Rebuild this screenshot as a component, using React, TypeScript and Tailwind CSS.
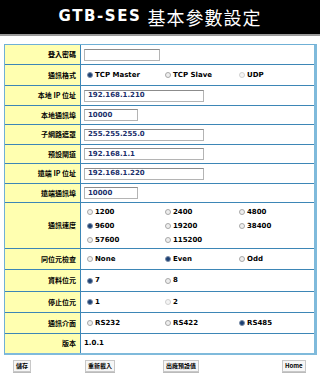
import React from "react";

const LBL = "font-['Noto_Sans_CJK_TC','Noto_Sans',sans-serif]";
const VAL = "font-['DejaVu_Sans',sans-serif]";

function Radio({ checked, label, dim }: { checked?: boolean; label: string; dim?: boolean }) {
  return (
    <div className="flex items-center gap-[2px]">
      <span
        className={
          "inline-block w-[6px] h-[6px] rounded-full border " +
          (checked
            ? "bg-[#1b3f73] border-[#7d8fa8]"
            : dim
            ? "bg-[#f4f4f4] border-[#d0d0d0]"
            : "bg-[#eeeeee] border-[#a8a8a8]")
        }
      />
      <span className={VAL + " text-[7px] font-bold text-black leading-none"}>{label}</span>
    </div>
  );
}

function Input({ value, w }: { value: string; w: string }) {
  return (
    <div
      className={
        "h-[12px] border border-[#b4b4b4] border-t-[#8c8c8c] bg-white flex items-center px-[3px] " + w
      }
    >
      <span className={VAL + " text-[7px] font-bold text-[#1b2f6b] leading-none"}>{value}</span>
    </div>
  );
}

function Row({
  label,
  h,
  last,
  children,
}: {
  label: string;
  h: string;
  last?: boolean;
  children?: React.ReactNode;
}) {
  return (
    <div className={"flex " + h + (last ? "" : " border-b border-[#3d86b6]")}>
      <div
        className={
          "w-[76px] bg-[#ffffb0] border-r border-[#3d86b6] flex items-center justify-end pr-[4px] " + LBL
        }
      >
        <span className="text-[7px] font-bold text-black leading-none">{label}</span>
      </div>
      <div className="flex-1 flex items-center pl-[3px]">{children}</div>
    </div>
  );
}

function Radios({ items }: { items: { l: string; c?: boolean; d?: boolean }[] }) {
  return (
    <div className="grid grid-cols-[78px_74px_1fr] pl-[3px] w-full">
      {items.map((it) => (
        <Radio key={it.l} label={it.l} checked={it.c} dim={it.d} />
      ))}
    </div>
  );
}

function Btn({ children }: { children: React.ReactNode }) {
  return (
    <div className="h-[12px] px-[2px] flex items-center border border-[#c8c8c8] bg-[#f6f6f6] shadow-[0_1px_0_#bbb]">
      <span className={"text-[6px] font-bold text-black leading-none " + LBL}>{children}</span>
    </div>
  );
}

export default function App() {
  return (
    <div className="w-[320px] h-[377px] bg-white overflow-hidden">
      <div className="h-[36px] bg-black border-b-2 border-[#9a9a9a] flex items-center justify-center gap-[6px] pb-[1px]">
        <span className={VAL + " text-[15px] font-bold text-white tracking-[1.6px] leading-none"}>
          GTB-SES
        </span>
        <span className="font-['Noto_Sans_CJK_TC',sans-serif] text-[18px] text-white leading-none tracking-[1px]">
          基本參數設定
        </span>
      </div>

      <div className="mt-[8px] ml-[4px] w-[313px] border border-[#6fb0d6] border-r-[3px] border-b-[2px] border-r-[#7fbadb] border-b-[#7fbadb]">
        <Row label="登入密碼" h="h-[20px]">
          <div className="w-[76px] h-[12px] border border-[#b4b4b4] border-t-[#8c8c8c] bg-white" />
        </Row>
        <Row label="通訊格式" h="h-[21px]">
          <Radios items={[{ l: "TCP Master", c: true }, { l: "TCP Slave" }, { l: "UDP", d: true }]} />
        </Row>
        <Row label="本地 IP 位址" h="h-[20px]">
          <Input value="192.168.1.210" w="w-[120px]" />
        </Row>
        <Row label="本地通訊埠" h="h-[19px]">
          <Input value="10000" w="w-[54px]" />
        </Row>
        <Row label="子網路遮罩" h="h-[20px]">
          <Input value="255.255.255.0" w="w-[120px]" />
        </Row>
        <Row label="預設閘道" h="h-[19px]">
          <Input value="192.168.1.1" w="w-[120px]" />
        </Row>
        <Row label="遠端 IP 位址" h="h-[20px]">
          <Input value="192.168.1.220" w="w-[120px]" />
        </Row>
        <Row label="遠端通訊埠" h="h-[19px]">
          <Input value="10000" w="w-[54px]" />
        </Row>
        <Row label="通訊速度" h="h-[46px]">
          <div className="grid grid-cols-[78px_74px_1fr] gap-y-[7px] pl-[3px] pt-[1px] w-full">
            <Radio label="1200" />
            <Radio label="2400" />
            <Radio label="4800" />
            <Radio label="9600" checked />
            <Radio label="19200" />
            <Radio label="38400" />
            <Radio label="57600" />
            <Radio label="115200" />
          </div>
        </Row>
        <Row label="同位元檢查" h="h-[21px]">
          <Radios items={[{ l: "None" }, { l: "Even", c: true }, { l: "Odd" }]} />
        </Row>
        <Row label="資料位元" h="h-[22px]">
          <Radios items={[{ l: "7", c: true }, { l: "8" }]} />
        </Row>
        <Row label="停止位元" h="h-[21px]">
          <Radios items={[{ l: "1", c: true }, { l: "2", d: true }]} />
        </Row>
        <Row label="通訊介面" h="h-[21px]">
          <Radios items={[{ l: "RS232" }, { l: "RS422" }, { l: "RS485", c: true }]} />
        </Row>
        <Row label="版本" h="h-[19px]" last>
          <span className={VAL + " text-[7px] font-bold text-black leading-none"}>1.0.1</span>
        </Row>
      </div>

      <div className="mt-[5px] flex pl-[13px]">
        <div className="w-[72px] flex">
          <Btn>儲存</Btn>
        </div>
        <div className="w-[78px] flex">
          <Btn>重新載入</Btn>
        </div>
        <div className="w-[119px] flex">
          <Btn>出廠預設值</Btn>
        </div>
        <div className="flex">
          <Btn>Home</Btn>
        </div>
      </div>
    </div>
  );
}
